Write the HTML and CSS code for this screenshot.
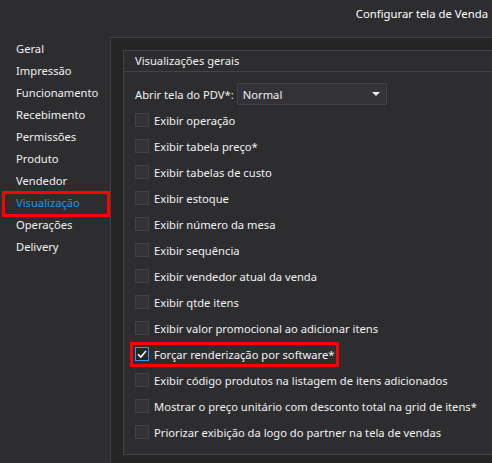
FILE: index.html
```html
<!DOCTYPE html>
<html lang="pt-BR">
<head>
    <meta charset="UTF-8">
    <meta name="viewport" content="width=device-width, initial-scale=1.0">
    <title>Configurar tela de Venda</title>
    <link rel="stylesheet" href="styles.css">
</head>
<body>
    <div class="title-bar">Configurar tela de Venda</div>

    <div class="main">
        <ul class="nav">
            <li>Geral</li>
            <li>Impressão</li>
            <li>Funcionamento</li>
            <li>Recebimento</li>
            <li>Permissões</li>
            <li>Produto</li>
            <li>Vendedor</li>
            <li class="active marked">Visualização</li>
            <li>Operações</li>
            <li>Delivery</li>
        </ul>

        <div class="panel">
            <div class="group">
                <div class="group-header">Visualizações gerais</div>
                <div class="group-body">
                    <div class="field">
                        <label>Abrir tela do PDV*:</label>
                        <div class="combo">
                            <span>Normal</span>
                            <span class="arrow"></span>
                        </div>
                    </div>

                    <div class="check"><span class="box"></span>Exibir operação</div>
                    <div class="check"><span class="box"></span>Exibir tabela preço*</div>
                    <div class="check"><span class="box"></span>Exibir tabelas de custo</div>
                    <div class="check"><span class="box"></span>Exibir estoque</div>
                    <div class="check"><span class="box"></span>Exibir número da mesa</div>
                    <div class="check"><span class="box"></span>Exibir sequência</div>
                    <div class="check"><span class="box"></span>Exibir vendedor atual da venda</div>
                    <div class="check"><span class="box"></span>Exibir qtde itens</div>
                    <div class="check"><span class="box"></span>Exibir valor promocional ao adicionar itens</div>
                    <div class="check">
                        <span class="marked-inline">
                            <span class="box checked">
                                <svg width="12" height="12" viewBox="0 0 12 12"><path d="M2 6.2 L4.8 9 L10 3" fill="none" stroke="#fff" stroke-width="1.6"/></svg>
                            </span>Forçar renderização por software*
                        </span>
                    </div>
                    <div class="check"><span class="box"></span>Exibir código produtos na listagem de itens adicionados</div>
                    <div class="check"><span class="box"></span>Mostrar o preço unitário com desconto total na grid de itens*</div>
                    <div class="check"><span class="box"></span>Priorizar exibição da logo do partner na tela de vendas</div>
                </div>
            </div>
        </div>
    </div>
</body>
</html>
```

FILE: styles.css
```css
html, body {
    height: 100%;
}
body {
    margin: 0;
    background-color: #2d2d30;
    color: #f1f1f1;
    font-family: "Noto Sans", sans-serif;
    font-size: 11.2px;
    white-space: nowrap;
    overflow: hidden;
}
.title-bar {
    height: 37px;
    line-height: 27px;
    text-align: right;
    padding-right: 4px;
    font-size: 11.3px;
    color: #ffffff;
}
.main {
    display: flex;
    height: calc(100% - 37px);
}
.nav {
    list-style: none;
    margin: 0;
    padding: 1px 0 0;
    width: 110px;
    flex-shrink: 0;
}
.nav li {
    position: relative;
    height: 22px;
    line-height: 22px;
    padding-left: 16px;
}
.nav li.active {
    color: #1c97ea;
}
/* red highlight frames */
.marked::after {
    content: "";
    position: absolute;
    left: 2px;
    right: 0;
    top: -1px;
    bottom: -3px;
    border: 3px solid #ff0000;
}
.panel {
    flex: 1;
    background-color: #252526;
    border-top: 1px solid #3f3f46;
    border-left: 1px solid #3f3f46;
    padding: 12px 0 0 12px;
}
.group {
    background-color: #2d2d30;
    border: 1px solid #434346;
    border-right: none;
}
.group-header {
    height: 20px;
    line-height: 20px;
    padding-left: 11px;
    border-bottom: 1px solid #434346;
}
.group-body {
    padding: 11px 0 9px 11px;
}
.field {
    display: flex;
    align-items: center;
    gap: 3px;
    height: 22px;
    margin-bottom: 2px;
}
.combo {
    display: flex;
    align-items: center;
    justify-content: space-between;
    box-sizing: border-box;
    width: 150px;
    height: 22px;
    padding: 0 6px 0 5px;
    background-color: #333337;
    border: 1px solid #434346;
}
.arrow {
    width: 0;
    height: 0;
    border-left: 4px solid transparent;
    border-right: 4px solid transparent;
    border-top: 4px solid #f1f1f1;
}
.check {
    display: flex;
    align-items: center;
    height: 26px;
}
.box {
    box-sizing: border-box;
    width: 14px;
    height: 14px;
    margin-right: 5px;
    flex-shrink: 0;
    background-color: #333337;
    border: 1px solid #434346;
    display: flex;
    align-items: center;
    justify-content: center;
}
.box.checked {
    background-color: #252526;
    border-color: #3399ff;
}
.marked-inline {
    position: relative;
    display: flex;
    align-items: center;
}
.marked-inline::after {
    content: "";
    position: absolute;
    left: -5px;
    right: -5px;
    top: -5px;
    bottom: -5px;
    border: 3px solid #ff0000;
}
```
